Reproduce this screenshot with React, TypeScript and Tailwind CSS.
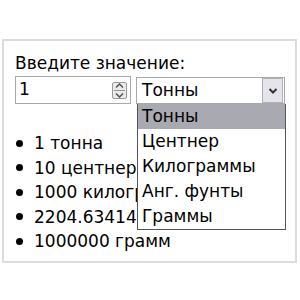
import React from "react";

export default function App() {
  const font = { fontFamily: '"DejaVu Sans", "Liberation Sans", sans-serif' };
  return (
    <div className="w-[300px] h-[300px] bg-white pt-[39px] pl-[2px]" style={font}>
      <div className="w-[295px] h-[224px] border-2 border-[#dcdcdc] pl-[11px] pt-[11px] text-[17px] text-black">
        <div className="leading-[23px] h-[23px]">Введите значение:</div>
        <div className="flex items-start gap-[5px] mt-[1px]">
          <div className="w-[116px] h-[28px] border border-[#a8a8a8] flex items-center pl-[3px] pr-[3px]">
            <span className="flex-1">1</span>
            <div className="w-[15px] h-[17px] border border-[#9a9a9a] rounded-[2px] bg-[#eaeaea] flex flex-col items-center justify-center gap-[2px]">
              <svg width="9" height="5" viewBox="0 0 9 5"><path d="M1 4.5 L4.5 1 L8 4.5" fill="none" stroke="#555" strokeWidth="1.5" /></svg>
              <div className="w-[11px] h-px bg-[#999]" />
              <svg width="9" height="5" viewBox="0 0 9 5"><path d="M1 0.5 L4.5 4 L8 0.5" fill="none" stroke="#555" strokeWidth="1.5" /></svg>
            </div>
          </div>
          <div className="relative mt-[1px]">
            <div className="w-[149px] h-[27px] border border-[#a8a8a8] flex items-center pl-[5px] pr-[1px]">
              <span className="flex-1">Тонны</span>
              <div className="w-[21px] h-[25px] border border-[#b0b0b8] bg-[#e4e4ea] flex items-center justify-center">
                <svg width="10" height="6" viewBox="0 0 10 6"><path d="M1.5 1 L5 4.5 L8.5 1" fill="none" stroke="#333" strokeWidth="2" /></svg>
              </div>
            </div>
            <div className="absolute left-[1px] top-[27px] w-[149px] bg-white border border-[#555] border-t-0 leading-[25px] z-10">
              <div className="bg-[#a9a9b1] pl-[4px]">Тонны</div>
              <div className="pl-[4px]">Центнер</div>
              <div className="pl-[4px]">Килограммы</div>
              <div className="pl-[4px]">Анг. фунты</div>
              <div className="pl-[4px]">Граммы</div>
            </div>
          </div>
        </div>
        <ul className="mt-[27px] leading-[24.5px] whitespace-nowrap">
          {["1 тонна", "10 центнеров", "1000 килограмм", "2204.63414 фунтов", "1000000 грамм"].map((t) => (
            <li key={t} className="flex items-center">
              <span className="w-[7px] h-[7px] rounded-full bg-black ml-[1px] mr-[11px]" />
              {t}
            </li>
          ))}
        </ul>
      </div>
    </div>
  );
}
